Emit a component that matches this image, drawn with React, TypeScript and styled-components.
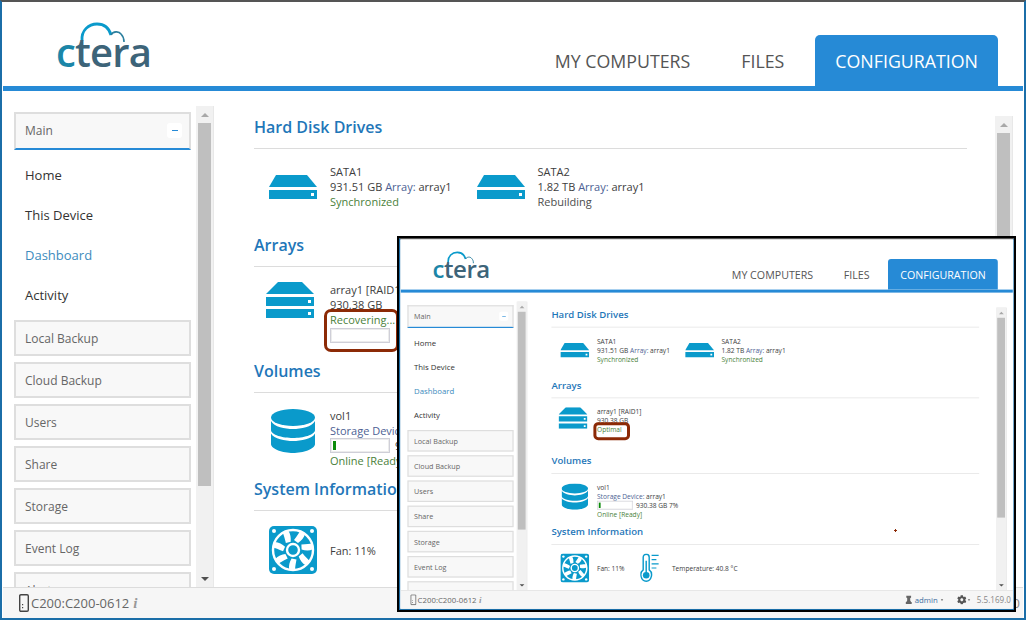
import React from 'react';
import styled, { createGlobalStyle } from 'styled-components';
import { FaCog } from 'react-icons/fa';

const GlobalStyle = createGlobalStyle`
	html,
	body {
		margin: 0;
		padding: 0;
		background: #fff;
		font-family: 'Open Sans', 'Liberation Sans', sans-serif;
	}
`;

const BRAND = '#268ad6';
const ICON = '#0a9acb';

const Page = styled.div`
	position: relative;
	width: 1026px;
	height: 620px;
	overflow: hidden;
`;

const Window = styled.div`
	box-sizing: border-box;
	width: 1026px;
	height: 620px;
	display: flex;
	flex-direction: column;
	background: #fff;
	border: 2px solid #1b6ea8;
	border-top-color: #555;
	padding: 0 1px;
`;

const Header = styled.header`
	flex: none;
	height: 84px;
	display: flex;
	justify-content: space-between;
	align-items: flex-end;
	padding: 0 25px 0 53px;
	border-bottom: 5px solid ${BRAND};
`;

const Logo = styled.svg`
	align-self: flex-start;
	margin-top: 17px;
	width: 100px;
	height: 60px;
`;

const Tabs = styled.nav`
	display: flex;
	gap: 11px;
`;

const Tab = styled.a<{ $active?: boolean }>`
	height: 51px;
	display: flex;
	align-items: center;
	padding: 0 20px;
	border-radius: 5px 5px 0 0;
	font-size: 17.8px;
	color: ${(props) => (props.$active ? '#fff' : '#555')};
	background: ${(props) => (props.$active ? BRAND : 'transparent')};
`;

const Body = styled.div`
	flex: 1;
	min-height: 0;
	display: flex;
	overflow: hidden;
`;

const Sidebar = styled.aside`
	flex: none;
	width: 210px;
	display: flex;
	box-sizing: border-box;
	padding-left: 11px;
`;

const Nav = styled.div`
	flex: none;
	width: 177px;
	margin-right: 5px;
	padding-top: 21px;
	display: flex;
	flex-direction: column;
`;

const NavHead = styled.div`
	flex: none;
	box-sizing: border-box;
	height: 38px;
	margin-bottom: 5px;
	padding: 0 7px 1px 9px;
	display: flex;
	justify-content: space-between;
	align-items: center;
	font-size: 12px;
	color: #666;
	background: #f8f8f8;
	border: 2px solid #dedede;
	border-bottom-color: ${BRAND};
`;

const Collapse = styled.span`
	width: 15px;
	height: 15px;
	display: flex;
	justify-content: center;
	align-items: center;
	background: #fff;
	border-radius: 3px;

	&::before {
		content: '';
		width: 6px;
		height: 1px;
		background: ${BRAND};
	}
`;

const NavLinks = styled.div`
	flex: none;
	margin-bottom: 5px;
`;

const NavLink = styled.a<{ $current?: boolean }>`
	height: 40px;
	display: flex;
	align-items: center;
	padding-left: 11px;
	font-size: 13px;
	color: ${(props) => (props.$current ? '#3d8bbd' : '#333')};
`;

const NavGroup = styled.a`
	flex: none;
	box-sizing: border-box;
	height: 36px;
	margin-bottom: 6px;
	display: flex;
	align-items: center;
	padding-left: 9px;
	font-size: 12px;
	color: #666;
	background: #f8f8f8;
	border: 2px solid #dedede;
`;

const Track = styled.div<{ $top: number }>`
	flex: none;
	box-sizing: border-box;
	width: 17px;
	margin-top: ${(props) => props.$top}px;
	padding: 0 2px;
	display: flex;
	flex-direction: column;
	align-items: center;
	background: #f1f1f1;
	box-shadow: 1px 0 0 #e8e8e8;
`;

const Arrow = styled.span<{ $down?: boolean }>`
	flex: none;
	height: 17px;
	display: flex;
	align-items: center;

	&::before {
		content: '';
		border-left: 4px solid transparent;
		border-right: 4px solid transparent;
		border-top: ${(props) => (props.$down ? '4px solid #505050' : '0')};
		border-bottom: ${(props) => (props.$down ? '0' : '4px solid #a8a8a8')};
	}
`;

const Thumb = styled.div<{ $length: number }>`
	flex: none;
	width: 100%;
	height: ${(props) => props.$length}px;
	background: #bfbfbf;
`;

const Spacer = styled.div`
	flex: 1;
`;

const Main = styled.main`
	flex: 1;
	min-width: 0;
	display: flex;
	padding: 0 11px 0 41px;
`;

const Content = styled.div`
	flex: none;
	width: 713px;
	margin-right: 28px;
	padding-top: 25px;
`;

const Section = styled.section<{ $height?: number }>`
	height: ${(props) => (props.$height ? `${props.$height}px` : 'auto')};
`;

const SectionTitle = styled.h2`
	box-sizing: border-box;
	height: 33px;
	margin: 0 0 15px;
	font-size: 16px;
	line-height: 22px;
	font-weight: 600;
	color: #1f77b9;
	border-bottom: 1px solid #dcdcdc;
`;

const Row = styled.div`
	display: flex;
`;

const Item = styled.div<{ $centered?: boolean }>`
	display: flex;
	align-items: ${(props) => (props.$centered ? 'center' : 'flex-start')};
	margin-right: 10px;
`;

const IconCell = styled.div<{ $left?: number; $top?: number; $width?: number }>`
	flex: none;
	box-sizing: border-box;
	width: ${(props) => props.$width ?? 76}px;
	padding-left: ${(props) => props.$left ?? 15}px;
	padding-top: ${(props) => props.$top ?? 0}px;
	line-height: 0;
`;

const Lines = styled.div`
	font-size: 11px;
	line-height: 15px;
	color: #3d3d3d;
`;

const Line = styled.div`
	white-space: nowrap;
`;

const Accent = styled.span`
	color: #4d5f94;
`;

const Status = styled.div<{ $ok?: boolean }>`
	white-space: nowrap;
	color: ${(props) => (props.$ok ? '#4a7f3a' : '#4d4d4d')};
`;

const Ringed = styled.div<{ $ring?: 'wide' | 'tight' }>`
	position: relative;
	width: fit-content;
	min-width: 62px;

	&::after {
		content: ${(props) => (props.$ring ? "''" : 'none')};
		position: absolute;
		box-sizing: border-box;
		inset: ${(props) => (props.$ring === 'wide' ? '-3px -4px -9px -6px' : '-5px 7px -10px -6px')};
		border: ${(props) => (props.$ring === 'wide' ? '3px' : '5px')} solid #8c2a06;
		border-radius: ${(props) => (props.$ring === 'wide' ? '7px' : '8px')};
	}
`;

const MeterRow = styled.div`
	display: flex;
	align-items: center;
	gap: 5px;
	white-space: nowrap;
`;

const Meter = styled.div`
	box-sizing: border-box;
	width: 60px;
	height: 15px;
	padding: 2px;
	background: #fff;
	border: 1px solid #cfcfd8;
	box-shadow: inset 0 0 0 1px #ececec;
`;

const RebuildMeter = styled(Meter)`
	margin-top: 1px;
`;

const MeterFill = styled.div`
	height: 100%;
	background: #0b8a0b;
`;

const Footer = styled.footer`
	flex: none;
	box-sizing: border-box;
	height: 31px;
	display: flex;
	justify-content: space-between;
	align-items: center;
	padding: 0 3px 0 16px;
	background: #f6f6f6;
	border-top: 1px solid #dcdcdc;
	font-size: 13px;
	color: #666;
`;

const FooterGroup = styled.div`
	display: flex;
	align-items: center;
`;

const DeviceName = styled.span`
	margin-left: 2px;
	font-size: 13px;
`;

const InfoMark = styled.span`
	margin-left: 4px;
	font-family: 'Liberation Serif', serif;
	font-style: italic;
	font-weight: 700;
	font-size: 15px;
	color: #999;
`;

const UserName = styled.span`
	margin-left: 5px;
	color: #3f6f9f;
`;

const Caret = styled.span`
	margin: 0 23px 0 5px;
	border-left: 2.5px solid transparent;
	border-right: 2.5px solid transparent;
	border-top: 3px solid #666;
`;

const GearCaret = styled(Caret)`
	margin: 0 11px 0 2px;
`;

const Version = styled.span`
	font-size: 13.5px;
	color: #888;
`;

const InsetFrame = styled.div`
	position: absolute;
	left: 397px;
	top: 236px;
	box-sizing: border-box;
	width: 619px;
	height: 376px;
	overflow: hidden;
	background: #fff;
	border: 2px solid #000;
`;

const InsetScale = styled.div`
	width: 1026px;
	height: 620px;
	transform: scale(0.6);
	transform-origin: 0 0;
`;

const Speck = styled.span`
	position: absolute;
	left: 496px;
	top: 291px;
	width: 1px;
	height: 3px;
	background: #8c2a06;

	&::after {
		content: '';
		position: absolute;
		left: -1px;
		top: 1px;
		width: 3px;
		height: 1px;
		background: #8c2a06;
	}
`;

const CtLogo = () => (
	<Logo viewBox="0 0 100 60">
		<path d="M26 22 C25 11 33 5 41 5 C48 5 53 9 55 16" fill="none" stroke={ICON} strokeWidth="2.8" />
		<path d="M55 16 C57 12 63 12 65 15 C67 17 68 19 68 23" fill="none" stroke="#2b7f9e" strokeWidth="1.6" />
		<text x="0" y="48" fontFamily="'Open Sans', sans-serif" fontWeight="600" fontSize="40" letterSpacing="-0.8">
			<tspan fill="#1b86a8">c</tspan>
			<tspan fill="#3d6479">tera</tspan>
		</text>
	</Logo>
);

const DriveIcon = () => (
	<svg width="48" height="24" viewBox="0 0 48 24">
		<path d="M7 0 H38 L48 12 H0 Z" fill={ICON} />
		<path d="M0 15 H48 V24 H0 Z M42 18 V21 H45 V18 Z" fill={ICON} fillRule="evenodd" />
	</svg>
);

const ArrayIcon = () => (
	<svg width="48" height="36" viewBox="0 0 48 36">
		<path d="M12 0 H36 L48 12 H0 Z" fill={ICON} />
		<path d="M0 15 H48 V24 H0 Z M42 18 V21 H45 V18 Z" fill={ICON} fillRule="evenodd" />
		<path d="M0 27 H48 V36 H0 Z M42 30 V33 H45 V30 Z" fill={ICON} fillRule="evenodd" />
	</svg>
);

const VolumeIcon = () => (
	<svg width="44" height="44" viewBox="0 0 44 44">
		<ellipse cx="22" cy="8.5" rx="22" ry="8.5" fill={ICON} />
		<path d="M0 12 C3 18 14 20 22 20 C30 20 41 18 44 12 V21 C44 26 32 29 22 29 C12 29 0 26 0 21 Z" fill={ICON} />
		<path d="M0 24.5 C3 30 14 32 22 32 C30 32 41 30 44 24.5 V35 C44 40 32 44 22 44 C12 44 0 40 0 35 Z" fill={ICON} />
	</svg>
);

const FAN_BLADES = [0, 51, 103, 154, 206, 257, 309];

const FanIcon = () => (
	<svg width="48" height="48" viewBox="0 0 48 48">
		<rect width="48" height="48" rx="5" fill={ICON} />
		<circle cx="5" cy="5" r="2" fill="#fff" />
		<circle cx="43" cy="5" r="2" fill="#fff" />
		<circle cx="5" cy="43" r="2" fill="#fff" />
		<circle cx="43" cy="43" r="2" fill="#fff" />
		<circle cx="24" cy="24" r="20" fill="none" stroke="#fff" strokeWidth="2.4" />
		{FAN_BLADES.map((angle) => (
			<path
				key={angle}
				d="M25 14 C28 10 30 7 31 5 L36 8 C35 12 32 15 29 17 Z"
				fill="#fff"
				transform={`rotate(${angle} 24 24)`}
			/>
		))}
		<circle cx="24" cy="24" r="6" fill="none" stroke="#fff" strokeWidth="2.4" />
	</svg>
);

const ThermometerIcon = () => (
	<svg width="31" height="48" viewBox="0 0 31 48">
		<path
			d="M5 27 V6 C5 -0.5 15 -0.5 15 6 V27 C22 32 19 46 10 46 C1 46 -2 32 5 27 Z"
			fill="none"
			stroke={ICON}
			strokeWidth="2.4"
		/>
		<circle cx="10" cy="36" r="5.5" fill={ICON} />
		<path d="M8.8 12 H11.2 V32 H8.8 Z" fill={ICON} />
		<path d="M19 3 H31 M19 10 H27 M19 17 H31 M19 24 H27" stroke={ICON} strokeWidth="2" />
	</svg>
);

const DeviceIcon = () => (
	<svg width="10" height="18" viewBox="0 0 10 18">
		<rect x="0.7" y="0.7" width="8.6" height="16.6" rx="1.2" fill="none" stroke="#444" strokeWidth="1.4" />
		<path d="M3 13 H4.2 V14.2 H3 Z M3 10 H4.2 V11.2 H3 Z" fill="#444" />
	</svg>
);

const AdminIcon = () => (
	<svg width="11" height="14" viewBox="0 0 11 14">
		<path
			d="M1.5 0 H9.5 V3 L8 4.5 V8 L9.5 10.5 H10.5 V14 H0.5 V10.5 H1.5 L3 8 V4.5 L1.5 3 Z"
			fill="#666"
		/>
	</svg>
);

type ConsoleProps = {
	secondDisk: string;
	secondDiskOk?: boolean;
	arrayStatus: string;
	rebuilding?: boolean;
	ring: 'wide' | 'tight';
};

const MENU_GROUPS = ['Local Backup', 'Cloud Backup', 'Users', 'Share', 'Storage', 'Event Log', 'Alerts'];

const Console: React.FC<ConsoleProps> = ({ secondDisk, secondDiskOk, arrayStatus, rebuilding, ring }) => (
	<Window>
		<Header>
			<CtLogo />
			<Tabs>
				<Tab>MY COMPUTERS</Tab>
				<Tab>FILES</Tab>
				<Tab $active>CONFIGURATION</Tab>
			</Tabs>
		</Header>

		<Body>
			<Sidebar>
				<Nav>
					<NavHead>
						Main
						<Collapse />
					</NavHead>
					<NavLinks>
						<NavLink>Home</NavLink>
						<NavLink>This Device</NavLink>
						<NavLink $current>Dashboard</NavLink>
						<NavLink>Activity</NavLink>
					</NavLinks>
					{MENU_GROUPS.map((group) => (
						<NavGroup key={group}>{group}</NavGroup>
					))}
				</Nav>
				<Track $top={15}>
					<Arrow />
					<Thumb $length={363} />
					<Spacer />
					<Arrow $down />
				</Track>
			</Sidebar>

			<Main>
				<Content>
					<Section $height={118}>
						<SectionTitle>Hard Disk Drives</SectionTitle>
						<Row>
							<Item>
								<IconCell $top={11}>
									<DriveIcon />
								</IconCell>
								<Lines>
									<Line>SATA1</Line>
									<Line>
										931.51 GB <Accent>Array:</Accent> array1
									</Line>
									<Status $ok>Synchronized</Status>
								</Lines>
							</Item>
							<Item>
								<IconCell $top={11}>
									<DriveIcon />
								</IconCell>
								<Lines>
									<Line>SATA2</Line>
									<Line>
										1.82 TB <Accent>Array:</Accent> array1
									</Line>
									<Status $ok={secondDiskOk}>{secondDisk}</Status>
								</Lines>
							</Item>
						</Row>
					</Section>

					<Section $height={126}>
						<SectionTitle>Arrays</SectionTitle>
						<Row>
							<Item>
								<IconCell $left={12}>
									<ArrayIcon />
								</IconCell>
								<Lines>
									<Line>array1 [RAID1]</Line>
									<Line>930.38 GB</Line>
									<Ringed $ring={ring}>
										<Status $ok>{arrayStatus}</Status>
										{rebuilding && <RebuildMeter />}
									</Ringed>
								</Lines>
							</Item>
						</Row>
					</Section>

					<Section $height={118}>
						<SectionTitle>Volumes</SectionTitle>
						<Row>
							<Item>
								<IconCell $left={17} $top={1}>
									<VolumeIcon />
								</IconCell>
								<Lines>
									<Line>vol1</Line>
									<Line>
										<Accent>Storage Device:</Accent> array1
									</Line>
									<MeterRow>
										<Meter>
											<MeterFill style={{ width: '5%' }} />
										</Meter>
										930.38 GB 7%
									</MeterRow>
									<Status $ok>Online [Ready]</Status>
								</Lines>
							</Item>
						</Row>
					</Section>

					<Section>
						<SectionTitle>System Information</SectionTitle>
						<Row>
							<Item $centered>
								<IconCell>
									<FanIcon />
								</IconCell>
								<Lines>Fan: 11%</Lines>
							</Item>
							<Item $centered>
								<IconCell $left={16} $width={69}>
									<ThermometerIcon />
								</IconCell>
								<Lines>Temperature: 40.8 °C</Lines>
							</Item>
						</Row>
					</Section>
				</Content>
				<Track $top={25}>
					<Arrow />
					<Thumb $length={333} />
					<Spacer />
					<Arrow $down />
				</Track>
			</Main>
		</Body>

		<Footer>
			<FooterGroup>
				<DeviceIcon />
				<DeviceName>C200:C200-0612</DeviceName>
				<InfoMark>i</InfoMark>
			</FooterGroup>
			<FooterGroup>
				<AdminIcon />
				<UserName>admin</UserName>
				<Caret />
				<FaCog size={16} color="#555" />
				<GearCaret />
				<Version>5.5.169.0</Version>
			</FooterGroup>
		</Footer>
	</Window>
);

const App: React.FC = () => (
	<Page>
		<GlobalStyle />
		<Console secondDisk="Rebuilding" arrayStatus="Recovering..." rebuilding ring="wide" />
		<InsetFrame>
			<InsetScale>
				<Console secondDisk="Synchronized" secondDiskOk arrayStatus="Optimal" ring="tight" />
			</InsetScale>
			<Speck />
		</InsetFrame>
	</Page>
);

export default App;
